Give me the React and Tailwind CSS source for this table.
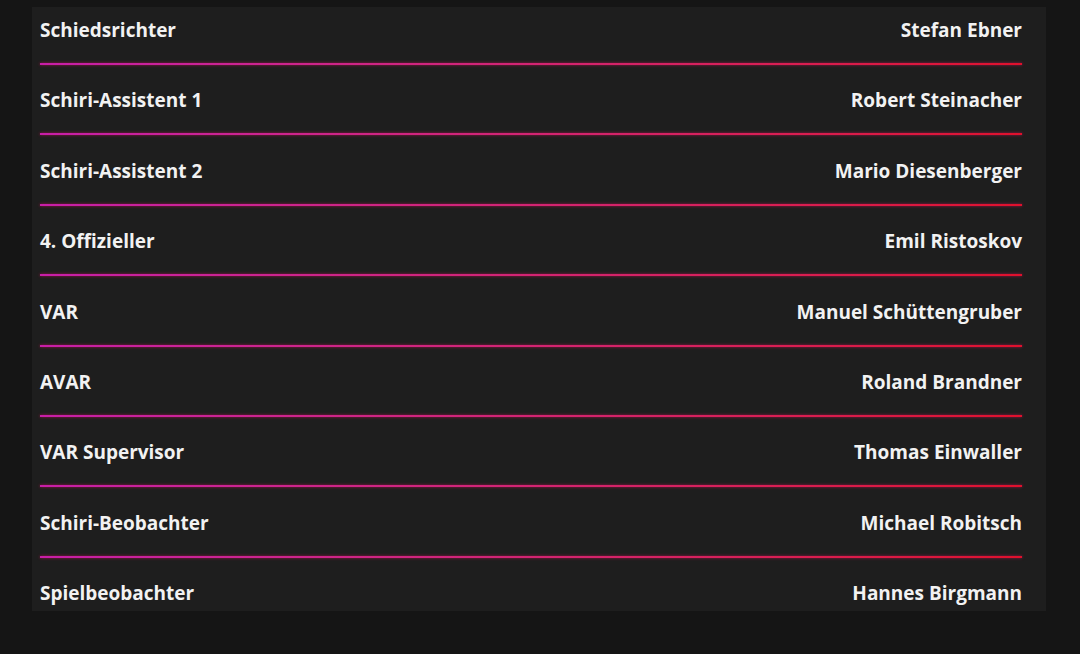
import React from 'react';

const officials = [
    { role: 'Schiedsrichter', name: 'Stefan Ebner' },
    { role: 'Schiri-Assistent 1', name: 'Robert Steinacher' },
    { role: 'Schiri-Assistent 2', name: 'Mario Diesenberger' },
    { role: '4. Offizieller', name: 'Emil Ristoskov' },
    { role: 'VAR', name: 'Manuel Schüttengruber' },
    { role: 'AVAR', name: 'Roland Brandner' },
    { role: 'VAR Supervisor', name: 'Thomas Einwaller' },
    { role: 'Schiri-Beobachter', name: 'Michael Robitsch' },
    { role: 'Spielbeobachter', name: 'Hannes Birgmann' },
];

export default function App(){
    return(
        <div className="w-[1080px] h-[654px] bg-[#151515] overflow-hidden font-['Open_Sans','Liberation_Sans',sans-serif]">
            <div className="ml-[32px] mt-[7px] w-[1014px] h-[604px] bg-[#1e1e1e] overflow-hidden pl-[8px] pr-[24px]">
                {officials.map((o, i) => (
                    <div key={o.role} className="h-[70.4px] flex flex-col pt-[12px]">
                        <div className="flex justify-between items-center h-[22px] text-[19px] leading-[22px] font-bold text-[#f2f2f2]">
                            <span>{o.role}</span>
                            <span>{o.name}</span>
                        </div>
                        {i < officials.length - 1 && (
                            <div className="mt-[22px] h-[2px] bg-gradient-to-r from-[#c81ea8] to-[#e0102c] shadow-[0_0_3px_rgba(220,20,90,0.7)]"></div>
                        )}
                    </div>
                ))}
            </div>
        </div>
    )
}
